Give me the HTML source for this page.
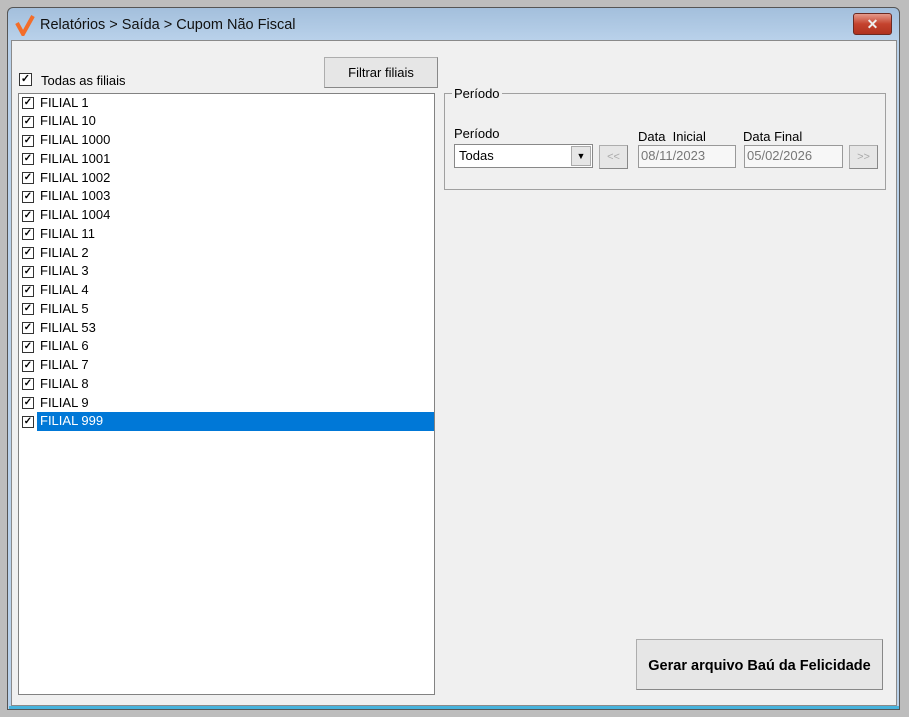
<!DOCTYPE html><html><head><style>
body{margin:0;width:909px;height:717px;background:#bdbdbd;position:relative;overflow:hidden;font-family:"Liberation Sans",sans-serif;font-size:13px;color:#000}
.a{position:absolute}
.cb{position:absolute;width:11px;height:11px;border:1px solid #333;background:#fff;font-size:11px;line-height:11px;text-align:center;font-weight:bold}
.btn{position:absolute;background:#e6e6e6;border:1px solid #adadad;border-right-color:#888;border-bottom-color:#888;text-align:center;box-sizing:border-box}
.inp{position:absolute;background:#f7f7f7;border:1px solid #999;box-sizing:border-box;color:#777;padding-left:2px;line-height:20px;font-size:13px}
</style></head><body>
<div class="a" style="left:7px;top:7px;width:893px;height:703px;border:1px solid #555;border-radius:6px 6px 0 0;background:linear-gradient(#a3bfdc,#b9d1ea 32px,#b9d1ea);box-sizing:border-box"></div>
<div class="a" style="left:11px;top:40px;width:886px;height:666px;background:#f0f0f0;border:1px solid #8a8a8a;box-sizing:border-box"></div>
<div class="a" style="left:9px;top:706px;width:890px;height:3px;background:#47b3dd"></div>
<svg class="a" style="left:15px;top:14px" width="20" height="22"><path d="M2 9 L8 20 L18 2" stroke="#f36d2a" stroke-width="4" fill="none"/></svg>
<div class="a" style="left:40px;top:17px;font-size:14.5px;line-height:17px;color:#111">Relatórios &gt; Saída &gt; Cupom Não Fiscal</div>
<div class="a" style="left:853px;top:13px;width:39px;height:22px;border-radius:3px;border:1px solid #6b2a22;background:linear-gradient(#e59a8b,#c4432e 50%,#b0321f);box-sizing:border-box;color:#eee;text-align:center;font-weight:bold;font-size:14px;line-height:20px">✕</div>
<div class="cb" style="left:19px;top:73px">✓</div>
<div class="a" style="left:41px;top:73px">Todas as filiais</div>
<div class="btn" style="left:324px;top:57px;width:114px;height:31px;line-height:29px;font-size:13px">Filtrar filiais</div>
<div class="a" style="left:18px;top:93px;width:417px;height:602px;background:#fff;border:1px solid #828282;box-sizing:border-box"></div>
<div class="a" style="left:37px;top:412px;width:397px;height:19px;background:#0078d7"></div>
<div id="L"></div>
<div class="a" style="left:444px;top:93px;width:442px;height:97px;border:1px solid #a0a0a0;box-sizing:border-box"></div>
<div class="a" style="left:452px;top:86px;background:#f0f0f0;padding:0 2px">Período</div>
<div class="a" style="left:454px;top:126px">Período</div>
<div class="a" style="left:454px;top:144px;width:139px;height:24px;background:#fff;border:1px solid #888;box-sizing:border-box"></div>
<div class="a" style="left:459px;top:148px">Todas</div>
<div class="a" style="left:571px;top:146px;width:20px;height:20px;background:#e6e6e6;border:1px solid #aaa;box-sizing:border-box;font-size:9px;text-align:center;line-height:18px">▼</div>
<div class="btn" style="left:599px;top:145px;width:29px;height:24px;color:#aaa;font-size:11px;line-height:22px">&lt;&lt;</div>
<div class="a" style="left:638px;top:129px">Data&nbsp; Inicial</div>
<div class="inp" style="left:638px;top:145px;width:98px;height:23px">08/11/2023</div>
<div class="a" style="left:743px;top:129px">Data Final</div>
<div class="inp" style="left:744px;top:145px;width:99px;height:23px">05/02/2026</div>
<div class="btn" style="left:849px;top:145px;width:29px;height:24px;color:#aaa;font-size:11px;line-height:22px">&gt;&gt;</div>
<div class="btn" style="left:636px;top:639px;width:247px;height:51px;line-height:52px;font-weight:bold;font-size:14.5px">Gerar arquivo Baú da Felicidade</div>
<script>
var n=["1","10","1000","1001","1002","1003","1004","11","2","3","4","5","53","6","7","8","9","999"],h="";
n.forEach(function(v,i){var y=94.5+i*18.75;h+='<div class="cb" style="left:22px;top:'+(y+2.5)+'px;width:10px;height:10px;font-size:10px;line-height:10px">✓</div><div class="a" style="left:40px;top:'+y+'px;'+(v=="999"?'color:#fff':'')+'">FILIAL '+v+'</div>';});
document.getElementById("L").innerHTML=h;
</script>
</body></html>
